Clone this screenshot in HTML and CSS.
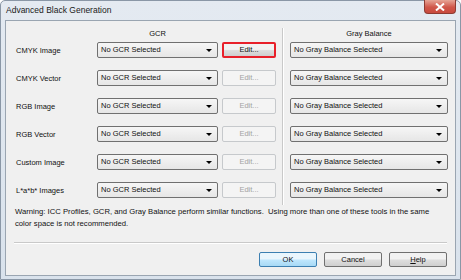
FILE: index.html
```html
<!DOCTYPE html>
<html lang="en">
<head>
    <meta charset="UTF-8">
    <title>Advanced Black Generation</title>
    <link rel="stylesheet" href="styles.css">
</head>
<body>
    <div class="window">
        <div class="titlebar">
            <span class="title">Advanced Black Generation</span>
            <div class="close-btn">
                <svg width="10" height="8" viewBox="0 0 10 8"><path d="M1 0.5 L9 7.5 M9 0.5 L1 7.5" stroke="#fff" stroke-width="2"/></svg>
            </div>
        </div>
        <div class="client">
            <div class="panel">
                <div class="head gcr-head">GCR</div>
                <div class="head gray-head">Gray Balance</div>
                <div class="sep"></div>

                <div class="label">CMYK Image</div>
                <div class="select">No GCR Selected<span class="arrow"></span></div>
                <div class="btn edit active">Edit...</div>
                <div class="select gray">No Gray Balance Selected<span class="arrow"></span></div>

                <div class="label">CMYK Vector</div>
                <div class="select">No GCR Selected<span class="arrow"></span></div>
                <div class="btn edit disabled">Edit...</div>
                <div class="select gray">No Gray Balance Selected<span class="arrow"></span></div>

                <div class="label">RGB Image</div>
                <div class="select">No GCR Selected<span class="arrow"></span></div>
                <div class="btn edit disabled">Edit...</div>
                <div class="select gray">No Gray Balance Selected<span class="arrow"></span></div>

                <div class="label">RGB Vector</div>
                <div class="select">No GCR Selected<span class="arrow"></span></div>
                <div class="btn edit disabled">Edit...</div>
                <div class="select gray">No Gray Balance Selected<span class="arrow"></span></div>

                <div class="label">Custom Image</div>
                <div class="select">No GCR Selected<span class="arrow"></span></div>
                <div class="btn edit disabled">Edit...</div>
                <div class="select gray">No Gray Balance Selected<span class="arrow"></span></div>

                <div class="label">L*a*b* Images</div>
                <div class="select">No GCR Selected<span class="arrow"></span></div>
                <div class="btn edit disabled">Edit...</div>
                <div class="select gray">No Gray Balance Selected<span class="arrow"></span></div>
            </div>

            <p class="warning">Warning: ICC Profiles, GCR, and Gray Balance perform similar functions.&nbsp; Using more than one of these tools in the same color space is not recommended.</p>
            <div class="divider"></div>
            <div class="footer">
                <div class="btn default">OK</div>
                <div class="btn">Cancel</div>
                <div class="btn"><u>H</u>elp</div>
            </div>
        </div>
    </div>
</body>
</html>
```

FILE: styles.css
```css
body {
    margin: 0;
    font-family: "Liberation Sans", Arial, sans-serif;
    font-size: 7.5px;
    color: #111;
    background: #fff;
}

.window {
    width: 461px;
    height: 280px;
    box-sizing: border-box;
    background: linear-gradient(#e4eaf1, #d9e2ec);
    border: 1px solid #8a97a6;
    border-radius: 5px 5px 0 0;
    display: flex;
    flex-direction: column;
}

.titlebar {
    height: 19px;
    display: flex;
    align-items: flex-start;
    justify-content: space-between;
    padding-left: 5px;
}

.title {
    font-size: 8.5px;
    color: #1a1a1a;
    margin-top: 4px;
}

.close-btn {
    width: 32px;
    height: 14px;
    margin-right: 4px;
    margin-top: -1px;
    box-sizing: border-box;
    border: 1px solid #8d3b32;
    border-top: none;
    border-radius: 0 0 4px 4px;
    background: linear-gradient(#e6a596, #d0574a 55%, #c84a3e);
    display: flex;
    align-items: center;
    justify-content: center;
}

.client {
    flex: 1;
    margin: 0 4px 3px 4px;
    background: #f0f0f0;
    border: 1px solid #9aa5b1;
    padding: 0 8px 0 8px;
    display: flex;
    flex-direction: column;
}

.panel {
    display: grid;
    grid-template-columns: 81px 121px 58px 14px 158px;
    grid-template-rows: 15px repeat(6, 28px);
    align-items: center;
    padding-left: 2px;
    position: relative;
}

.head {
    text-align: center;
    align-self: end;
    margin-bottom: -2px;
}

.gcr-head {
    grid-column: 2;
}

.gray-head {
    grid-column: 5;
}

.sep {
    position: absolute;
    left: 268px;
    top: 7px;
    height: 177px;
    border-left: 1px solid #c9c9c9;
    border-right: 1px solid #fff;
}

.label {
    grid-column: 1;
}

.select {
    grid-column: 2;
    height: 16px;
    box-sizing: border-box;
    border: 1px solid #707070;
    border-radius: 2px;
    background: linear-gradient(#f6f6f6, #e6e6e6);
    padding-left: 3px;
    line-height: 14px;
    position: relative;
    white-space: nowrap;
}

.select.gray {
    grid-column: 5;
}

.arrow {
    position: absolute;
    right: 5px;
    top: 6px;
    border-left: 3px solid transparent;
    border-right: 3px solid transparent;
    border-top: 3px solid #000;
}

.btn {
    height: 15px;
    box-sizing: border-box;
    border: 1px solid #707070;
    border-radius: 2px;
    background: linear-gradient(#f2f2f2 45%, #dddddd 55%, #cfcfcf);
    text-align: center;
    line-height: 13px;
}

.edit {
    grid-column: 3;
    margin-left: 4px;
    height: 16px;
    line-height: 14px;
}

.edit.active {
    border: 2px solid #e8202a;
    line-height: 12px;
}

.edit.disabled {
    border-color: #c6c9cc;
    background: #f4f4f4;
    color: #a3a3a3;
}

.warning {
    margin: 2px 0 0 1px;
    font-size: 7.7px;
    line-height: 12px;
    width: 420px;
}

.divider {
    margin: 12px 0 0 0;
    border-top: 1px solid #c9c9c9;
    border-bottom: 1px solid #fff;
}

.footer {
    display: flex;
    justify-content: flex-end;
    gap: 7px;
    margin-top: 8px;
}

.footer .btn {
    width: 58px;
}

.footer .btn.default {
    border-color: #3c7fb1;
    background: linear-gradient(#eaf6fd 45%, #bee6fd 55%, #a7d9f5);
}
```
